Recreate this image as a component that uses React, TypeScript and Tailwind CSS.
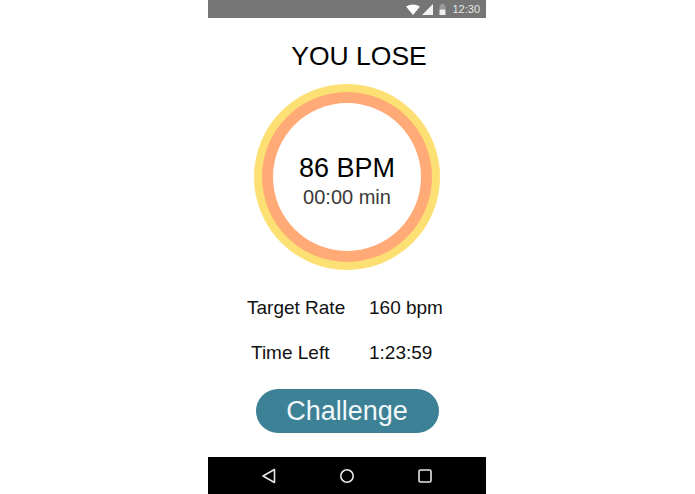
export default function App() {
  return (
    <div className="flex w-[695px] h-[494px] bg-white overflow-hidden" style={{ fontFamily: '"Liberation Sans", Arial, sans-serif' }}>
      <div className="ml-[208px] w-[278px] h-[494px] flex flex-col bg-white">
        <div className="h-[18px] bg-[#757575] flex items-center justify-end pr-[6px] text-[#e6e6e6]">
          <svg width="14" height="11" viewBox="0 0 14 11" className="mr-[2px]">
            <path d="M0 2.5 Q7 -1.5 14 2.5 L7 11 Z" fill="#ffffff" />
          </svg>
          <svg width="11" height="11" viewBox="0 0 11 11" className="mr-[6px]">
            <path d="M11 0 V11 H0 Z" fill="#f5f5f5" />
          </svg>
          <svg width="7" height="11" viewBox="0 0 7 11" className="mr-[6px]">
            <rect x="2" y="0" width="3" height="2" fill="#a0a0a0" />
            <rect x="0.5" y="1.5" width="6" height="4" fill="#9a9a9a" />
            <rect x="0.5" y="5.5" width="6" height="5.5" fill="#f0f0f0" />
          </svg>
          <span className="text-[11px] leading-none">12:30</span>
        </div>
        <div className="flex-1 flex flex-col items-center">
          <h1 className="mt-[22px] h-[32px] text-[26.5px] leading-[32px] font-normal text-black pl-[24px]">YOU LOSE</h1>
          <div className="mt-[12px] w-[186px] h-[186px] rounded-full bg-[#fde074] flex items-center justify-center">
            <div className="w-[170px] h-[170px] rounded-full bg-[#ffaa77] flex items-center justify-center">
              <div className="w-[148px] h-[148px] rounded-full bg-white flex flex-col items-center justify-center">
                <div className="text-[27px] leading-[32px] text-black mt-[7px]">86 BPM</div>
                <div className="text-[20px] leading-[24px] text-[#3a3a3a] mt-[1px]">00:00 min</div>
              </div>
            </div>
          </div>
          <div className="mt-[26px] grid grid-cols-[122px_auto] text-[19px] leading-[24px] text-[#111] self-start pl-[39px]">
            <div>Target Rate</div>
            <div>160 bpm</div>
            <div className="mt-[21px] pl-[4px]">Time Left</div>
            <div className="mt-[21px]">1:23:59</div>
          </div>
          <div className="mt-[24px] w-[183px] h-[44px] rounded-[22px] bg-[#3d8196] flex items-center justify-center text-[27px] text-[#f2f8f9]">Challenge</div>
        </div>
        <div className="h-[37px] bg-black flex items-center justify-center gap-[62px] pt-[1px]">
          <svg width="16" height="16" viewBox="0 0 16 16" fill="none" stroke="#e8e8e8" strokeWidth="1.6" strokeLinejoin="round">
            <path d="M13.5 1.5 V14.5 L2 8 Z" />
          </svg>
          <svg width="16" height="16" viewBox="0 0 16 16" fill="none" stroke="#e8e8e8" strokeWidth="1.6">
            <circle cx="8" cy="8" r="6.2" />
          </svg>
          <svg width="16" height="16" viewBox="0 0 16 16" fill="none" stroke="#e8e8e8" strokeWidth="1.6">
            <rect x="2" y="2" width="12" height="12" rx="1.5" />
          </svg>
        </div>
      </div>
    </div>
  );
}
